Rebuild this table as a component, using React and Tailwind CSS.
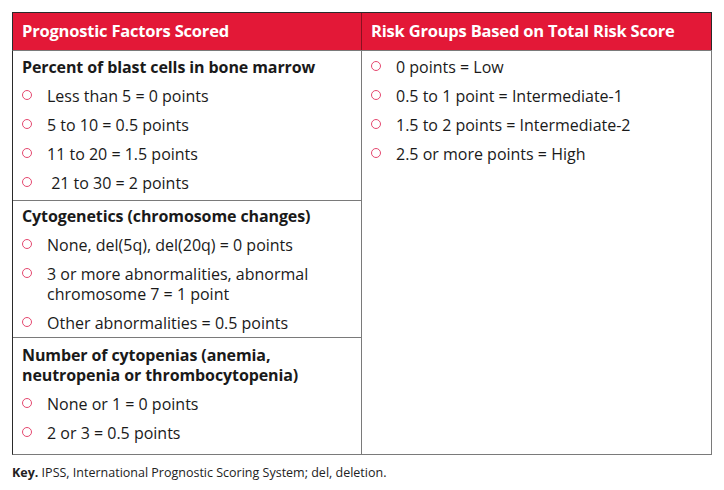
import React from "react";

const Bullet = ({ children }) => (
  <div className="flex items-start leading-5 tracking-normal">
    <span className="w-[25px] shrink-0 pt-[4px]">
      <span className="block w-[10px] h-[10px] rounded-full border-[1.5px] border-[#e5486f]"></span>
    </span>
    <span>{children}</span>
  </div>
);

const App = () => {
  return (
    <div className="w-[724px] h-[490px] bg-white pt-3 pl-3 text-[#1a1a1a] font-['Open_Sans',sans-serif]">
      <div className="w-[700px]">
        <div className="grid grid-cols-2 bg-[#e31837] text-white font-bold text-[16.5px] tracking-[-0.2px] border-t border-l border-r border-[#2a2a2a] h-[38px]">
          <div className="px-[9px] flex items-center border-r border-[#8a1020]">Prognostic Factors Scored</div>
          <div className="px-[9px] flex items-center">Risk Groups Based on Total Risk Score</div>
        </div>
        <div className="grid grid-cols-2 text-[16px] tracking-[-0.1px] border-l border-[#2a2a2a] border-r border-r-[#7a7a7a] border-b border-b-[#7a7a7a] border-t border-t-[#7a7a7a]">
          <div className="border-r border-[#7a7a7a]">
            <div className="px-[9px] pt-[6px] pb-[7px] border-b border-[#7a7a7a] flex flex-col gap-[9px]">
              <div className="font-bold leading-5">Percent of blast cells in bone marrow</div>
              <Bullet>Less than 5 = 0 points</Bullet>
              <Bullet>5 to 10 = 0.5 points</Bullet>
              <Bullet>11 to 20 = 1.5 points</Bullet>
              <Bullet>&nbsp;21 to 30 = 2 points</Bullet>
            </div>
            <div className="px-[9px] pt-[5px] pb-[4px] border-b border-[#7a7a7a] flex flex-col gap-[9px]">
              <div className="font-bold leading-5">Cytogenetics (chromosome changes)</div>
              <Bullet>None, del(5q), del(20q) = 0 points</Bullet>
              <Bullet>3 or more abnormalities, abnormal<br />chromosome 7 = 1 point</Bullet>
              <Bullet>Other abnormalities = 0.5 points</Bullet>
            </div>
            <div className="px-[9px] pt-[7px] pb-[11px] flex flex-col gap-[9px]">
              <div className="font-bold leading-5">Number of cytopenias (anemia,<br />neutropenia or thrombocytopenia)</div>
              <Bullet>None or 1 = 0 points</Bullet>
              <Bullet>2 or 3 = 0.5 points</Bullet>
            </div>
          </div>
          <div className="px-[9px] pt-[6px] flex flex-col gap-[9px]">
            <Bullet>0 points = Low</Bullet>
            <Bullet>0.5 to 1 point = Intermediate-1</Bullet>
            <Bullet>1.5 to 2 points = Intermediate-2</Bullet>
            <Bullet>2.5 or more points = High</Bullet>
          </div>
        </div>
        <p className="mt-[9px] text-[12.5px] text-[#222]">
          <span className="font-bold">Key.</span> IPSS, International Prognostic Scoring System; del, deletion.
        </p>
      </div>
    </div>
  );
};

export default App;
